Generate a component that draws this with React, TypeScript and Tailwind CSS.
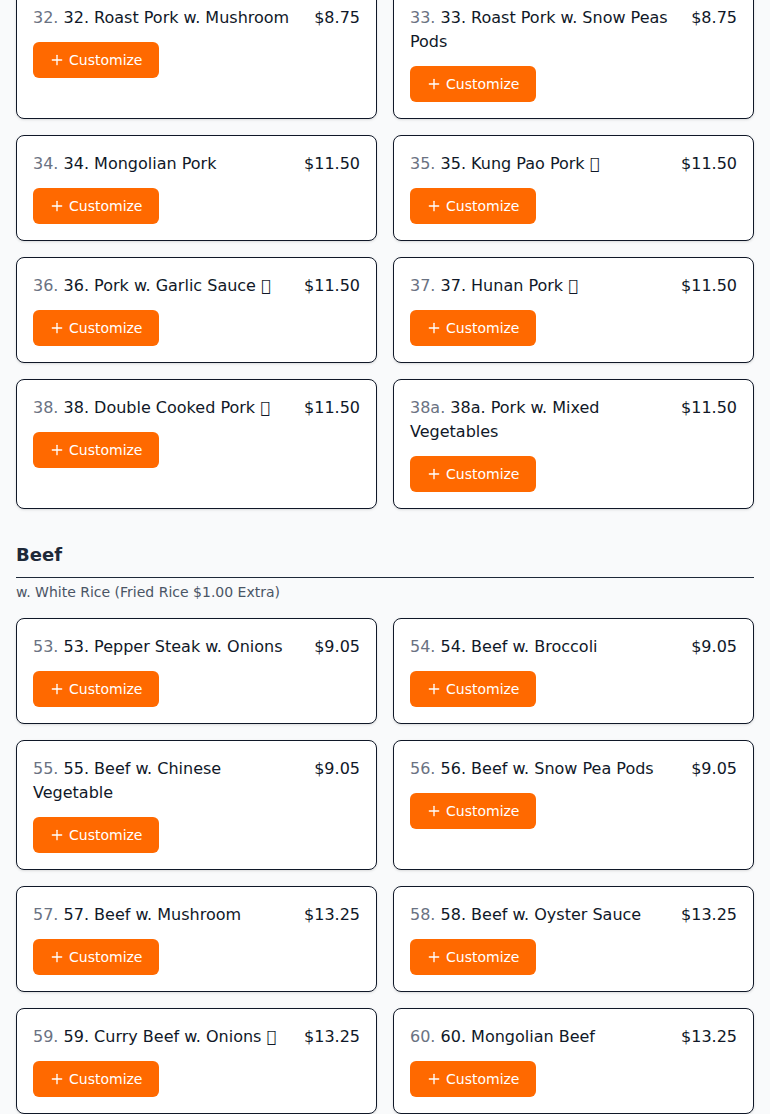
import React from 'react';
import { Plus } from 'lucide-react';

type Item = { num: string; name: string; price: string };

// spicy marker — the reference shows the missing-glyph box here
const HOT = '\u{10FFFD}';

const pork: Item[] = [
  { num: '32.', name: '32. Roast Pork w. Mushroom', price: '$8.75' },
  { num: '33.', name: '33. Roast Pork w. Snow Peas Pods', price: '$8.75' },
  { num: '34.', name: '34. Mongolian Pork', price: '$11.50' },
  { num: '35.', name: `35. Kung Pao Pork ${HOT}`, price: '$11.50' },
  { num: '36.', name: `36. Pork w. Garlic Sauce ${HOT}`, price: '$11.50' },
  { num: '37.', name: `37. Hunan Pork ${HOT}`, price: '$11.50' },
  { num: '38.', name: `38. Double Cooked Pork ${HOT}`, price: '$11.50' },
  { num: '38a.', name: '38a. Pork w. Mixed Vegetables', price: '$11.50' },
];

const beef: Item[] = [
  { num: '53.', name: '53. Pepper Steak w. Onions', price: '$9.05' },
  { num: '54.', name: '54. Beef w. Broccoli', price: '$9.05' },
  { num: '55.', name: '55. Beef w. Chinese Vegetable', price: '$9.05' },
  { num: '56.', name: '56. Beef w. Snow Pea Pods', price: '$9.05' },
  { num: '57.', name: '57. Beef w. Mushroom', price: '$13.25' },
  { num: '58.', name: '58. Beef w. Oyster Sauce', price: '$13.25' },
  { num: '59.', name: `59. Curry Beef w. Onions ${HOT}`, price: '$13.25' },
  { num: '60.', name: '60. Mongolian Beef', price: '$13.25' },
];

const MenuCard: React.FC<{ item: Item }> = ({ item }) => (
  <div className="bg-white border border-gray-900 rounded-lg shadow-sm p-4">
    <div className="flex justify-between gap-4">
      <span className="text-gray-900">
        <span className="text-gray-500">{item.num}</span> {item.name}
      </span>
      <span className="text-gray-900 whitespace-nowrap">{item.price}</span>
    </div>
    <button className="mt-3 flex items-center gap-1 bg-orange-500 text-white text-sm px-4 py-2 rounded-md">
      <Plus className="w-4 h-4" strokeWidth={2} />
      Customize
    </button>
  </div>
);

const App: React.FC = () => {
  return (
    <div className="min-h-screen bg-gray-50 overflow-hidden" style={{ fontFamily: '"DejaVu Sans", sans-serif' }}>
      <div className="px-4 -mt-[11px] pb-8">
        {/* Pork */}
        <div className="grid grid-cols-2 gap-4">
          {pork.map((it) => (
            <MenuCard key={it.num} item={it} />
          ))}
        </div>

        {/* Beef */}
        <div className="mt-8">
          <h2 className="text-lg font-bold text-gray-800 pb-2 border-b border-gray-800">Beef</h2>
          <p className="text-sm text-gray-600 mt-1">w. White Rice (Fried Rice $1.00 Extra)</p>
          <div className="grid grid-cols-2 gap-4 mt-4">
            {beef.map((it) => (
              <MenuCard key={it.num} item={it} />
            ))}
          </div>
        </div>
      </div>
    </div>
  );
};

export default App;
